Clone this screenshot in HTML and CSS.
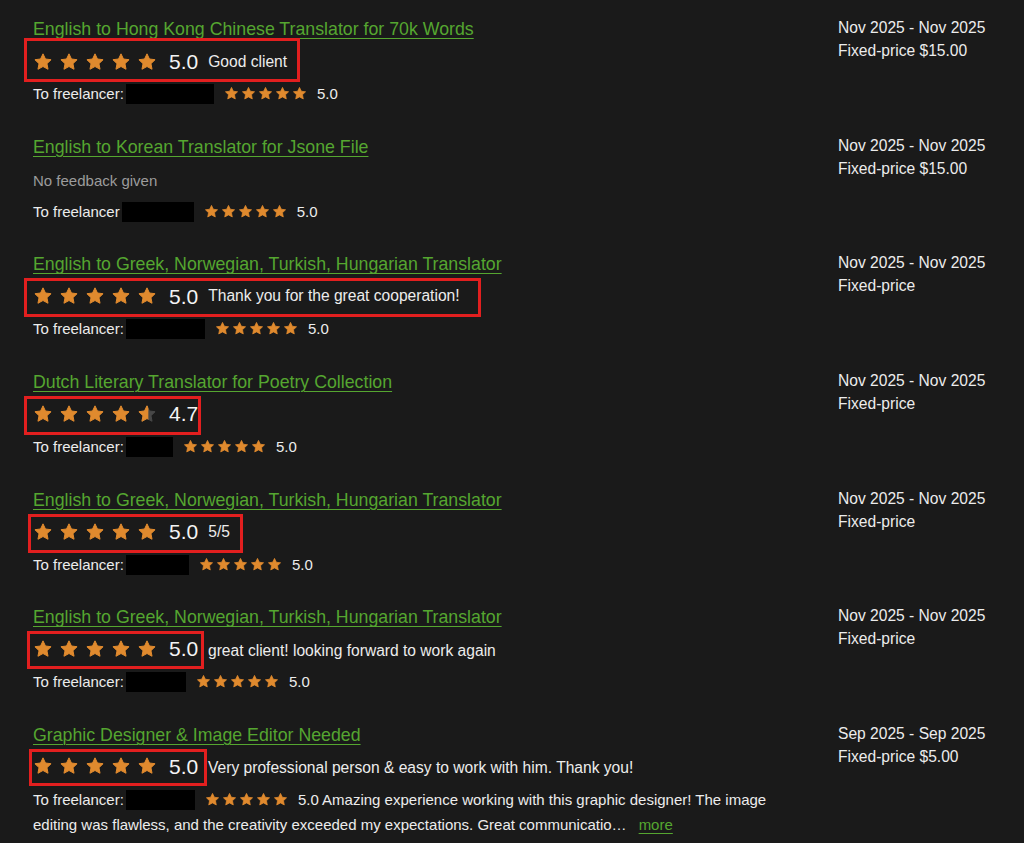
FILE: index.html
```html
<!DOCTYPE html>
<html lang="en">
<head>
<meta charset="utf-8">
<title>Work history</title>
<link rel="stylesheet" href="styles.css">
</head>
<body>
<svg class="defs" width="0" height="0" aria-hidden="true">
  <defs>
    <path id="star" d="M12 2.2l2.95 6.2 6.75.85-4.95 4.7 1.3 6.75L12 17.4l-6.05 3.3 1.3-6.75-4.95-4.7 6.75-.85z"/>
    <clipPath id="part"><rect x="0" y="0" width="13.6" height="24"/></clipPath>
  </defs>
</svg>
<main class="list">

  <section class="row">
    <div class="main">
      <a class="title" href="#">English to Hong Kong Chinese Translator for 70k Words</a>
      <div class="rating">
        <div class="mark m1">
          <span class="stars big"><svg viewBox="0 0 24 24"><use href="#star"/></svg><svg viewBox="0 0 24 24"><use href="#star"/></svg><svg viewBox="0 0 24 24"><use href="#star"/></svg><svg viewBox="0 0 24 24"><use href="#star"/></svg><svg viewBox="0 0 24 24"><use href="#star"/></svg></span>
          <span class="score">5.0</span>
          <span class="comment">Good client</span>
        </div>
      </div>
      <p class="fl">To freelancer:<span class="redact" style="width:88px"></span><span class="stars small"><svg viewBox="0 0 24 24"><use href="#star"/></svg><svg viewBox="0 0 24 24"><use href="#star"/></svg><svg viewBox="0 0 24 24"><use href="#star"/></svg><svg viewBox="0 0 24 24"><use href="#star"/></svg><svg viewBox="0 0 24 24"><use href="#star"/></svg></span><span class="fscore">5.0</span></p>
    </div>
    <div class="side">
      <p>Nov 2025 - Nov 2025</p>
      <p>Fixed-price $15.00</p>
    </div>
  </section>

  <section class="row">
    <div class="main">
      <a class="title" href="#">English to Korean Translator for Jsone File</a>
      <div class="rating">
        <span class="nofb">No feedback given</span>
      </div>
      <p class="fl">To freelancer<span class="redact" style="width:72px"></span><span class="stars small"><svg viewBox="0 0 24 24"><use href="#star"/></svg><svg viewBox="0 0 24 24"><use href="#star"/></svg><svg viewBox="0 0 24 24"><use href="#star"/></svg><svg viewBox="0 0 24 24"><use href="#star"/></svg><svg viewBox="0 0 24 24"><use href="#star"/></svg></span><span class="fscore">5.0</span></p>
    </div>
    <div class="side">
      <p>Nov 2025 - Nov 2025</p>
      <p>Fixed-price $15.00</p>
    </div>
  </section>

  <section class="row">
    <div class="main">
      <a class="title" href="#">English to Greek, Norwegian, Turkish, Hungarian Translator</a>
      <div class="rating">
        <div class="mark m3">
          <span class="stars big"><svg viewBox="0 0 24 24"><use href="#star"/></svg><svg viewBox="0 0 24 24"><use href="#star"/></svg><svg viewBox="0 0 24 24"><use href="#star"/></svg><svg viewBox="0 0 24 24"><use href="#star"/></svg><svg viewBox="0 0 24 24"><use href="#star"/></svg></span>
          <span class="score">5.0</span>
          <span class="comment">Thank you for the great cooperation!</span>
        </div>
      </div>
      <p class="fl">To freelancer:<span class="redact" style="width:79px"></span><span class="stars small"><svg viewBox="0 0 24 24"><use href="#star"/></svg><svg viewBox="0 0 24 24"><use href="#star"/></svg><svg viewBox="0 0 24 24"><use href="#star"/></svg><svg viewBox="0 0 24 24"><use href="#star"/></svg><svg viewBox="0 0 24 24"><use href="#star"/></svg></span><span class="fscore">5.0</span></p>
    </div>
    <div class="side">
      <p>Nov 2025 - Nov 2025</p>
      <p>Fixed-price</p>
    </div>
  </section>

  <section class="row">
    <div class="main">
      <a class="title" href="#">Dutch Literary Translator for Poetry Collection</a>
      <div class="rating">
        <div class="mark m4">
          <span class="stars big"><svg viewBox="0 0 24 24"><use href="#star"/></svg><svg viewBox="0 0 24 24"><use href="#star"/></svg><svg viewBox="0 0 24 24"><use href="#star"/></svg><svg viewBox="0 0 24 24"><use href="#star"/></svg><svg viewBox="0 0 24 24"><use class="empty" href="#star"/><use href="#star" clip-path="url(#part)"/></svg></span>
          <span class="score">4.7</span>
        </div>
      </div>
      <p class="fl">To freelancer:<span class="redact" style="width:47px"></span><span class="stars small"><svg viewBox="0 0 24 24"><use href="#star"/></svg><svg viewBox="0 0 24 24"><use href="#star"/></svg><svg viewBox="0 0 24 24"><use href="#star"/></svg><svg viewBox="0 0 24 24"><use href="#star"/></svg><svg viewBox="0 0 24 24"><use href="#star"/></svg></span><span class="fscore">5.0</span></p>
    </div>
    <div class="side">
      <p>Nov 2025 - Nov 2025</p>
      <p>Fixed-price</p>
    </div>
  </section>

  <section class="row">
    <div class="main">
      <a class="title" href="#">English to Greek, Norwegian, Turkish, Hungarian Translator</a>
      <div class="rating">
        <div class="mark m5">
          <span class="stars big"><svg viewBox="0 0 24 24"><use href="#star"/></svg><svg viewBox="0 0 24 24"><use href="#star"/></svg><svg viewBox="0 0 24 24"><use href="#star"/></svg><svg viewBox="0 0 24 24"><use href="#star"/></svg><svg viewBox="0 0 24 24"><use href="#star"/></svg></span>
          <span class="score">5.0</span>
          <span class="comment">5/5</span>
        </div>
      </div>
      <p class="fl">To freelancer:<span class="redact" style="width:63px"></span><span class="stars small"><svg viewBox="0 0 24 24"><use href="#star"/></svg><svg viewBox="0 0 24 24"><use href="#star"/></svg><svg viewBox="0 0 24 24"><use href="#star"/></svg><svg viewBox="0 0 24 24"><use href="#star"/></svg><svg viewBox="0 0 24 24"><use href="#star"/></svg></span><span class="fscore">5.0</span></p>
    </div>
    <div class="side">
      <p>Nov 2025 - Nov 2025</p>
      <p>Fixed-price</p>
    </div>
  </section>

  <section class="row">
    <div class="main">
      <a class="title" href="#">English to Greek, Norwegian, Turkish, Hungarian Translator</a>
      <div class="rating">
        <div class="mark m6">
          <span class="stars big"><svg viewBox="0 0 24 24"><use href="#star"/></svg><svg viewBox="0 0 24 24"><use href="#star"/></svg><svg viewBox="0 0 24 24"><use href="#star"/></svg><svg viewBox="0 0 24 24"><use href="#star"/></svg><svg viewBox="0 0 24 24"><use href="#star"/></svg></span>
          <span class="score">5.0</span>
        </div>
        <span class="comment out">great client! looking forward to work again</span>
      </div>
      <p class="fl">To freelancer:<span class="redact" style="width:60px"></span><span class="stars small"><svg viewBox="0 0 24 24"><use href="#star"/></svg><svg viewBox="0 0 24 24"><use href="#star"/></svg><svg viewBox="0 0 24 24"><use href="#star"/></svg><svg viewBox="0 0 24 24"><use href="#star"/></svg><svg viewBox="0 0 24 24"><use href="#star"/></svg></span><span class="fscore">5.0</span></p>
    </div>
    <div class="side">
      <p>Nov 2025 - Nov 2025</p>
      <p>Fixed-price</p>
    </div>
  </section>

  <section class="row">
    <div class="main">
      <a class="title" href="#">Graphic Designer &amp; Image Editor Needed</a>
      <div class="rating">
        <div class="mark m7">
          <span class="stars big"><svg viewBox="0 0 24 24"><use href="#star"/></svg><svg viewBox="0 0 24 24"><use href="#star"/></svg><svg viewBox="0 0 24 24"><use href="#star"/></svg><svg viewBox="0 0 24 24"><use href="#star"/></svg><svg viewBox="0 0 24 24"><use href="#star"/></svg></span>
          <span class="score">5.0</span>
        </div>
        <span class="comment out o7">Very professional person &amp; easy to work with him. Thank you!</span>
      </div>
      <div class="fl">
        <div class="line">To freelancer:<span class="redact" style="width:69px"></span><span class="stars small"><svg viewBox="0 0 24 24"><use href="#star"/></svg><svg viewBox="0 0 24 24"><use href="#star"/></svg><svg viewBox="0 0 24 24"><use href="#star"/></svg><svg viewBox="0 0 24 24"><use href="#star"/></svg><svg viewBox="0 0 24 24"><use href="#star"/></svg></span><span class="fscore">5.0 Amazing experience working with this graphic designer! The image</span></div>
        <div class="line l2"><span>editing was flawless, and the creativity exceeded my expectations. Great communicatio…</span><a class="more" href="#">more</a></div>
      </div>
    </div>
    <div class="side">
      <p>Sep 2025 - Sep 2025</p>
      <p>Fixed-price $5.00</p>
    </div>
  </section>

</main>
</body>
</html>
```
FILE: styles.css
```css
* { box-sizing: border-box; }

html, body {
  margin: 0;
  background: #1a1a1a;
}

body {
  font-family: "Liberation Sans", Arial, Helvetica, sans-serif;
  color: #ececec;
  padding: 16px 0 0 33px;
  height: 843px;
  overflow: hidden;
}

.defs { position: absolute; }

.list {
  display: flex;
  flex-direction: column;
}

.row {
  display: flex;
  align-items: flex-start;
  height: 117.67px;
}

.main {
  width: 780px;
  flex: none;
}

.title {
  display: block;
  height: 26px;
  line-height: 26px;
  font-size: 17.75px;
  color: #55a630;
  text-decoration: underline;
  text-decoration-thickness: 1px;
  text-underline-offset: 3px;
  white-space: nowrap;
}

.rating {
  display: flex;
  align-items: center;
  height: 39px;
  margin-top: 1px;
}

.mark {
  display: flex;
  align-items: center;
  height: 39px;
  border: 3px solid #e21f1f;
  margin-left: -9px;
  padding: 0 0 3px 6px;
}

.m1 { width: 276px; height: 44px; margin-top: -5px; padding-top: 3px; padding-bottom: 0; }
.m3 { width: 457px; }
.m4 { width: 177px; }
.m5 { width: 215px; margin-left: -5px; padding-left: 2px; }
.m6 { width: 177px; margin-left: -6px; padding-left: 3px; height: 38px; margin-top: -1px; }
.m7 { width: 178px; margin-left: -4px; padding-left: 1px; height: 37px; margin-top: -1px; }

.stars {
  display: inline-flex;
  align-items: center;
  fill: #e08a2e;
  stroke: #e08a2e;
  stroke-linejoin: round;
  stroke-width: 1.2;
}

.stars.big { gap: 6px; }
.stars.big svg { width: 20px; height: 20px; display: block; }

.stars.small { gap: 2px; vertical-align: -2px; margin-right: 10px; }
.stars.small svg { width: 15px; height: 15px; display: block; }

.stars .empty { fill: #474747; stroke: #474747; }

.score {
  font-size: 21px;
  color: #f4f4f4;
  margin-left: 12px;
  line-height: 1;
}

.comment {
  font-size: 15.6px;
  color: #ececec;
  margin-left: 10px;
  white-space: nowrap;
}

.comment.out { margin-left: 4px; }
.comment.o7 { margin-left: 1px; }

.nofb {
  font-size: 15px;
  color: #9c9c9c;
}

.fl {
  margin: 0;
  font-size: 15px;
  line-height: 24px;
  color: #ececec;
}

.line { white-space: nowrap; }
.line.l2 { line-height: 25px; }

.redact {
  display: inline-block;
  height: 20px;
  background: #000;
  vertical-align: -5px;
  margin: 0 10px 0 2px;
}

.fscore { font-size: 15px; }

.more {
  color: #55a630;
  text-decoration: underline;
  text-underline-offset: 3px;
  margin-left: 12px;
}

.side {
  margin-left: 25px;
  font-size: 15.6px;
  line-height: 23px;
  color: #ececec;
}

.side p { margin: 0; white-space: nowrap; }
```
